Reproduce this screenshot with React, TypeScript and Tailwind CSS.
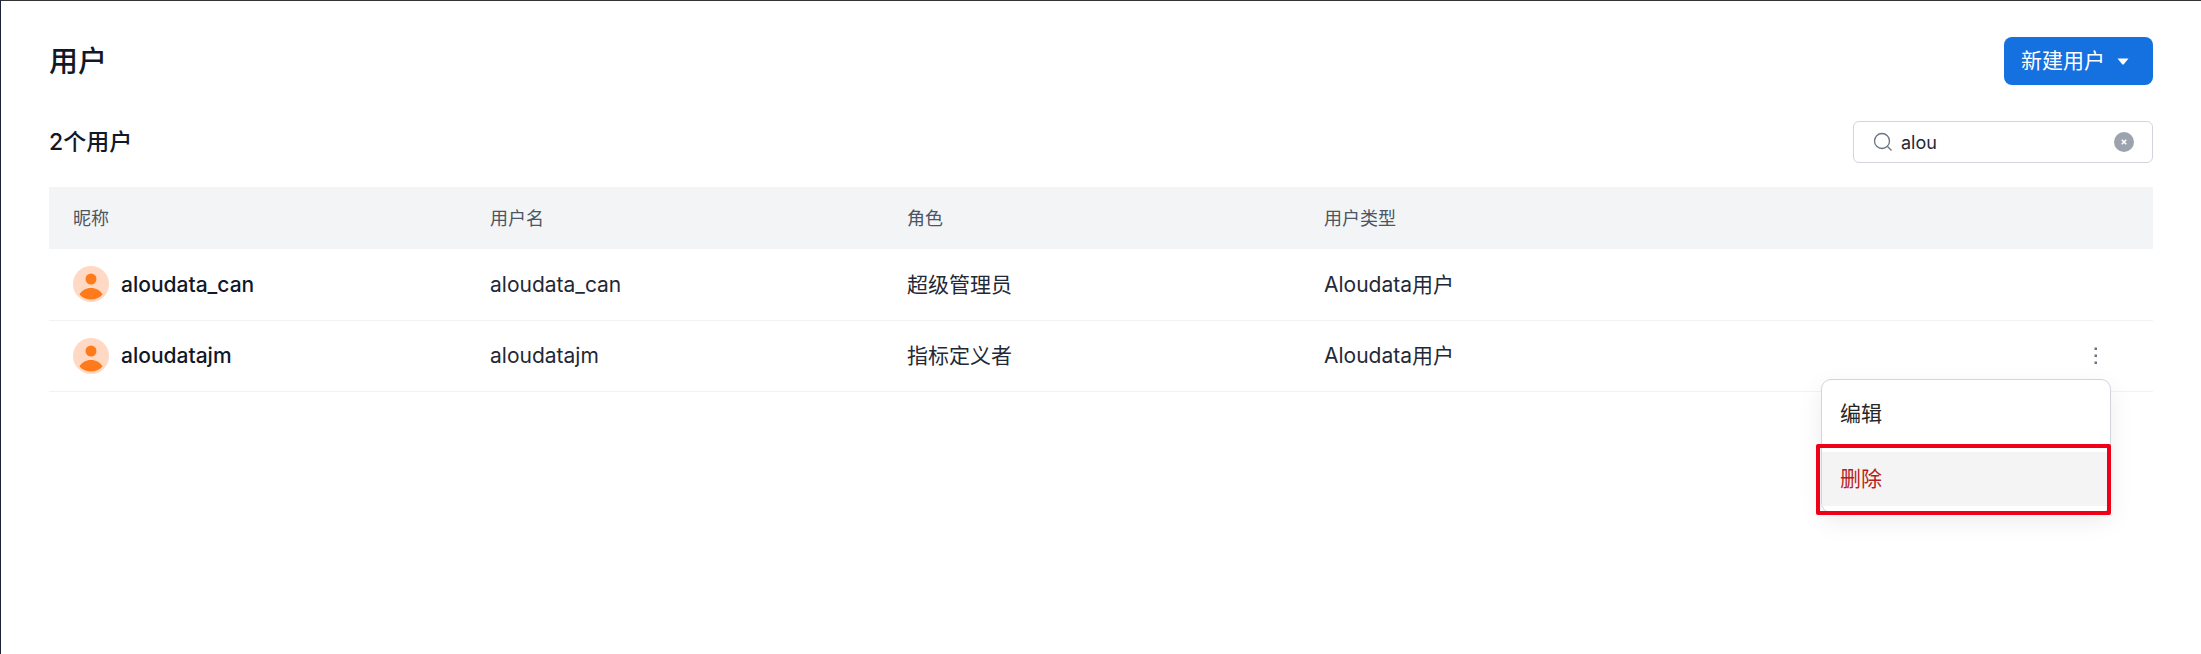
import React from "react";

const font = "font-['Inter','Noto_Sans_CJK_SC',sans-serif]";

function Avatar() {
  return (
    <svg width="36" height="36" viewBox="0 0 36 36" className="shrink-0">
      <circle cx="18" cy="18" r="18" fill="#FFD9C4" />
      <circle cx="18" cy="13" r="5.500" fill="#FF7A1A" />
      <path d="M6.500 28.500C8.500 24.500 13 22 18 22C23 22 27.500 24.500 29.500 28.500C26.500 31.800 22.500 33.500 18 33.500C13.500 33.500 9.500 31.800 6.500 28.500Z" fill="#FF7A1A" />
    </svg>
  );
}

function Row({ nick, user, role, more }: { nick: string; user: string; role: string; more?: boolean }) {
  return (
    <div className="grid grid-cols-[417px_417px_417px_1fr_62px] h-[71.5px] items-center border-b border-[#f1f2f4] text-[21px] text-[#1f2937]">
      <div className="flex items-center gap-3 pl-6">
        <Avatar />
        <span className="font-medium text-[#111827]">{nick}</span>
      </div>
      <div className="pl-6">{user}</div>
      <div className="pl-6">{role}</div>
      <div className="pl-6">Aloudata用户</div>
      <div className="flex justify-start pl-[2px]">
        {more && (
          <svg width="6" height="20" viewBox="0 0 6 20">
            <rect x="1.500" y="1.500" width="2.500" height="2.500" fill="#6b7280" />
            <rect x="1.500" y="8.500" width="2.500" height="2.500" fill="#6b7280" />
            <rect x="1.500" y="15.500" width="2.500" height="2.500" fill="#6b7280" />
          </svg>
        )}
      </div>
    </div>
  );
}

export default function App() {
  return (
    <div className={`${font} relative h-[654px] w-[2201px] overflow-hidden bg-white border-t border-l border-t-[#333333] border-l-[#1a2238] pl-[48px] pr-[48px]`}>
      <div className="flex items-start justify-between pt-[36px]">
        <h1 className="mt-[5px] text-[29px] leading-[40px] font-medium text-[#111827]">用户</h1>
        <button className="flex h-[48px] w-[149px] items-center gap-[12px] rounded-[8px] bg-[#1570e0] pl-[17px] text-[21px] text-white">
          新建用户
          <svg width="12" height="7" viewBox="0 0 12 7"><path d="M0.500 0.500H11.500L7 6C6.500 6.700 5.500 6.700 5 6Z" fill="#ffffff" /></svg>
        </button>
      </div>
      <div className="mt-[36px] flex items-center justify-between">
        <h2 className="text-[23px] leading-[32px] font-medium text-[#111827]">2个用户</h2>
        <div className="flex h-[42px] w-[300px] items-center rounded-[6px] border border-[#d1d5db] pl-[19px] pr-[18px]">
          <svg width="20" height="20" viewBox="0 0 20 20" fill="none" stroke="#6b7280" strokeWidth="1.300">
            <circle cx="9" cy="9" r="7.500" />
            <path d="M14.500 14.500L18.500 18.500" />
          </svg>
          <span className="ml-[8px] flex-1 text-[18px] text-[#1f2937]">alou</span>
          <span className="flex h-5 w-5 items-center justify-center rounded-full bg-[#9ca3af]">
            <svg width="6" height="6" viewBox="0 0 8 8" stroke="#ffffff" strokeWidth="2"><path d="M1 1L7 7M7 1L1 7" /></svg>
          </span>
        </div>
      </div>
      <div className="mt-[24px] grid h-[62px] grid-cols-[417px_417px_417px_1fr] items-center bg-[#f3f4f6] text-[18px] text-[#4b5563]">
        <div className="pl-6">昵称</div>
        <div className="pl-6">用户名</div>
        <div className="pl-6">角色</div>
        <div className="pl-6">用户类型</div>
      </div>
      <Row nick="aloudata_can" user="aloudata_can" role="超级管理员" />
      <Row nick="aloudatajm" user="aloudatajm" role="指标定义者" more />

      <div className="absolute left-[1820px] top-[378px] w-[290px] h-[134px] overflow-hidden rounded-[10px] border border-[#d1d5db] bg-white shadow-[0_8px_24px_rgba(0,0,0,0.08)] py-[6px] text-[21px]">
        <div className="flex h-[56px] items-center pl-[18px] text-[#262626]">编辑</div>
        <div className="mt-[10px] flex h-[54px] items-center bg-[#f4f4f4] pl-[18px] text-[#b91c1c]">删除</div>
      </div>
      <div className="absolute left-[1815px] top-[443px] w-[295px] h-[71px] rounded-[2px] border-[4px] border-[#f00018]" />
    </div>
  );
}
